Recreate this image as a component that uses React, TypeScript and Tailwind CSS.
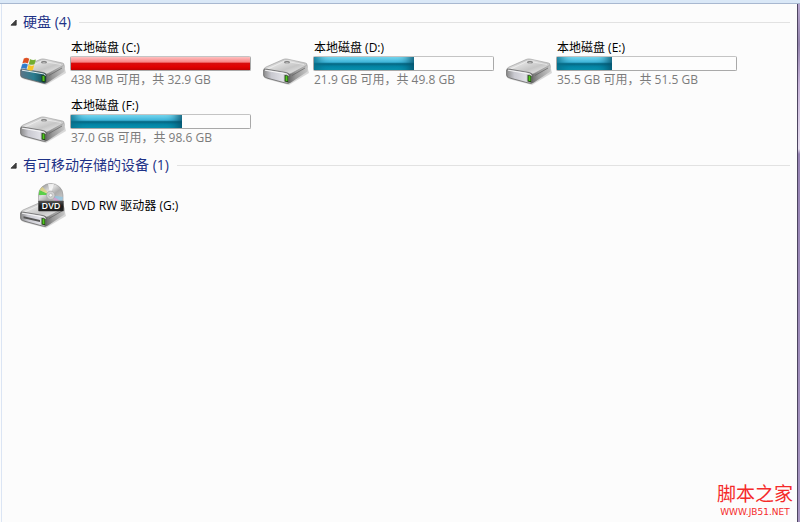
import React, { useState } from 'react';

interface Drive {
  label: string;
  free: string;
  used: number; // percent of the disk in use
  full?: boolean;
  system?: boolean;
}

const drives: Drive[] = [
  { label: '本地磁盘 (C:)', free: '438 MB 可用，共 32.9 GB', used: 100, full: true, system: true },
  { label: '本地磁盘 (D:)', free: '21.9 GB 可用，共 49.8 GB', used: 56 },
  { label: '本地磁盘 (E:)', free: '35.5 GB 可用，共 51.5 GB', used: 31 },
  { label: '本地磁盘 (F:)', free: '37.0 GB 可用，共 98.6 GB', used: 62 },
];

const DriveGradients = () => (
  <svg width="0" height="0" className="absolute" aria-hidden="true">
    <defs>
      <linearGradient id="driveTop" x1="0" y1="0" x2="1" y2="1">
        <stop offset="0" stopColor="#8c8c8c" />
        <stop offset="0.35" stopColor="#dedede" />
        <stop offset="0.6" stopColor="#c6c6c6" />
        <stop offset="1" stopColor="#f4f4f4" />
      </linearGradient>
      <linearGradient id="driveFront" x1="0" y1="0" x2="1" y2="0">
        <stop offset="0" stopColor="#8a8a8a" />
        <stop offset="0.3" stopColor="#c9c9d0" />
        <stop offset="0.75" stopColor="#e0e0e6" />
        <stop offset="1" stopColor="#808080" />
      </linearGradient>
      <linearGradient id="driveSystem" x1="0" y1="0" x2="1" y2="0">
        <stop offset="0" stopColor="#5c7487" />
        <stop offset="0.5" stopColor="#2a7d90" />
        <stop offset="1" stopColor="#123f4a" />
      </linearGradient>
      <linearGradient id="driveSide" x1="0" y1="0" x2="1" y2="0">
        <stop offset="0" stopColor="#616161" />
        <stop offset="0.4" stopColor="#999" />
        <stop offset="1" stopColor="#c8c8c8" />
      </linearGradient>
      <linearGradient id="disc" x1="0" y1="0" x2="1" y2="1">
        <stop offset="0" stopColor="#7e7e7e" />
        <stop offset="0.4" stopColor="#dedede" />
        <stop offset="0.6" stopColor="#ababab" />
        <stop offset="1" stopColor="#d4d4d4" />
      </linearGradient>
      <linearGradient id="discLabel" x1="0" y1="0" x2="0" y2="1">
        <stop offset="0" stopColor="#555" />
        <stop offset="0.5" stopColor="#1c1c1c" />
        <stop offset="1" stopColor="#222" />
      </linearGradient>
    </defs>
  </svg>
);

const DriveBody = ({ system, slot }: { system?: boolean; slot?: boolean }) => (
  <>
    <path d="M5 24 L28 30 L48 18 L47 14 Z" fill="#000" opacity="0.14" />
    <path d="M27 18.5 L46 9.5 Q47.3 10 47 12 L46.5 16.5 L30 27.5 Q28 28.8 26.5 28.4 Z" fill="url(#driveSide)" />
    <path d="M3 14 Q3 13 5 12 L22 4.5 Q24 3.6 26 4 L44.5 8 Q47 8.8 45.5 10.3 L31 18 Q29 19.2 26.5 18.8 L5 15.5 Z" fill="url(#driveTop)" stroke="#8e8e8e" strokeWidth="0.5" />
    <path d="M7 14 L23.5 6 L43 9.5" fill="none" stroke="#f8f8f8" strokeWidth="0.8" opacity="0.7" />
    <path d="M2.6 15 Q2.8 13.8 4.5 14 L25.5 17.6 Q28.2 18.2 28.4 20.5 L28.4 26 Q28.2 29 25.5 28.3 L4.5 22.7 Q2.6 22 2.6 20 Z" fill={system ? 'url(#driveSystem)' : 'url(#driveFront)'} stroke="#666" strokeWidth="0.8" />
    <path d="M4 15.2 L25.5 18.9 Q27.2 19.3 27.3 21" fill="none" stroke="#fafafa" strokeWidth="0.9" />
    {slot && <path d="M5.5 18.2 L22 22 V24 L5.5 20.2 Z" fill="#555" />}
    <ellipse cx="26" cy="7.2" rx="3" ry="1.2" fill="#7d7d7d" />
    <ellipse cx="26" cy="7.8" rx="1.8" ry="0.6" fill="#c9c9c9" />
    <path d="M31 20.5 L44 13" stroke="#606060" strokeWidth="0.7" />
    <path d="M23.6 20 L27.4 20.8 V27.2 L23.6 26.4 Z" fill="#1d3d12" />
    <path d="M24.5 20.8 L26.5 21.2 V26.2 L24.5 25.8 Z" fill="#4fc81c" />
  </>
);

const DriveIcon = ({ system }: { system?: boolean }) => (
  <svg width="48" height="34" viewBox="0 0 48 34" className="shrink-0" aria-hidden="true">
    <DriveBody system={system} />
    {system && (
      <g stroke="#fff" strokeOpacity="0.4" strokeWidth="0.3">
        <path d="M5.8 3.4 Q8.6 1.8 11.3 3.7 L10 8.6 Q7.3 7 4.3 8.4 Z" fill="#dd4f22" />
        <path d="M12 4 Q14.7 5.7 18 4.5 L16.6 9.3 Q13.6 10.5 10.8 8.9 Z" fill="#72ad30" />
        <path d="M4.1 9.2 Q7 7.7 9.8 9.4 L8.5 14.2 Q5.7 12.5 2.8 13.7 Z" fill="#2f7ccb" />
        <path d="M10.5 9.8 Q13.3 11.4 16.3 10.1 L15 14.9 Q12 16.2 9.2 14.5 Z" fill="#f7c426" />
      </g>
    )}
  </svg>
);

const DvdIcon = () => (
  <svg width="48" height="46" viewBox="0 0 48 46" className="shrink-0" aria-hidden="true">
    <g transform="translate(0 15)">
      <DriveBody slot />
    </g>
    <path d="M20.5 19 V12 A12.2 11.5 0 0 1 45 12 V19 Z" fill="url(#disc)" stroke="#969696" strokeWidth="0.6" />
    <path d="M32.5 12 L21.5 7 L20.8 12 Z" fill="#4fcf3a" opacity="0.9" />
    <path d="M32.5 12 L24.2 3.8 L21.5 7 Z" fill="#e4d878" opacity="0.7" />
    <path d="M32.5 12 L43.8 18.5 L38 19 Z" fill="#d79ad6" opacity="0.8" />
    <path d="M32.5 12 L45 14 L43.8 18.5 Z" fill="#8cc8e8" opacity="0.7" />
    <path d="M32.5 12 L30 1 L36 1 Z" fill="#fff" opacity="0.7" />
    <circle cx="32.7" cy="12.3" r="4.2" fill="#d0d0d0" stroke="#a0a0a0" strokeWidth="0.6" />
    <circle cx="32.7" cy="12.3" r="1.7" fill="#fafafa" stroke="#999" strokeWidth="0.5" />
    <rect x="20.3" y="17.8" width="25.4" height="10.4" rx="0.6" fill="url(#discLabel)" />
    <text x="33" y="26.3" textAnchor="middle" fontSize="9" fontFamily="Open Sans, sans-serif" fontWeight="600" fill="#fff">
      DVD
    </text>
  </svg>
);

const UsageBar = ({ drive }: { drive: Drive }) => (
  <div
    role="meter"
    aria-label={drive.label}
    aria-valuemin={0}
    aria-valuemax={100}
    aria-valuenow={drive.used}
    className="h-[15px] rounded-[2px] border border-[#a9a9a9] bg-[#fdfdfd] border-t-[#c4c4c4]"
  >
    <div
      className={
        drive.full
          ? 'h-full bg-[linear-gradient(to_bottom,#ffc0c0_0%,#f88585_38%,#d80c0c_50%,#e20000_75%,#c00000_100%)]'
          : 'h-full bg-[linear-gradient(to_bottom,#7cdcf4_0%,#3db4d8_40%,#046682_52%,#0588a8_75%,#0b93ae_100%)] shadow-[inset_-14px_0_12px_-10px_#05506a,inset_14px_0_12px_-10px_#0b6f8a]'
      }
      style={{ width: `${drive.used}%` }}
    />
  </div>
);

interface SectionProps {
  title: string;
  count: number;
  children: React.ReactNode;
}

const Section: React.FC<SectionProps> = ({ title, count, children }) => {
  const [open, setOpen] = useState(true);

  return (
    <section>
      <h2 className="flex items-center gap-2 pr-[7px]">
        <button
          type="button"
          aria-expanded={open}
          onClick={() => setOpen(!open)}
          className="flex items-center gap-1.5 text-sm leading-5 text-[#1e3287]"
        >
          <svg width="7" height="7" viewBox="0 0 7 7" className={open ? '' : '-rotate-45'} aria-hidden="true">
            <path d="M6.2 1 V6.2 H1 Z" fill="#404040" stroke="#303030" strokeWidth="0.8" />
          </svg>
          <span>
            {title} ({count})
          </span>
        </button>
        <span className="h-px flex-1 bg-[#e2e2e2]" />
      </h2>
      {open && children}
    </section>
  );
};

export default function App() {
  return (
    <div className="flex min-h-screen flex-col border-t-[3px] border-[#dae8f7] bg-[#fcfcfc] font-['Open_Sans','Noto_Sans_CJK_SC',sans-serif]">
      <DriveGradients />
      <div className="flex flex-1 border-t border-t-[#a8b8d0]">
        <main className="ml-px flex flex-1 flex-col border-l border-[#dbe5f4] pt-2 pl-2">
          <Section title="硬盘" count={4}>
            <ul className="flex flex-wrap gap-y-[9px] py-2 pl-2">
              {drives.map((drive) => (
                <li key={drive.label} className="flex w-[243px] items-end gap-1">
                  <DriveIcon system={drive.system} />
                  <div className="w-[181px]">
                    <p className="pl-px text-xs leading-4 text-black">{drive.label}</p>
                    <UsageBar drive={drive} />
                    <p className="mt-px pl-px text-xs leading-4 text-[#7b7b7b]">{drive.free}</p>
                    <div className="h-px" />
                  </div>
                </li>
              ))}
            </ul>
          </Section>

          <Section title="有可移动存储的设备" count={1}>
            <ul className="py-2 pl-2">
              <li className="flex items-center gap-1">
                <DvdIcon />
                <p className="pl-px text-xs leading-4 text-black">DVD RW 驱动器 (G:)</p>
              </li>
            </ul>
          </Section>

          <footer className="mt-auto self-end pr-1 pb-1 text-center text-[#f52a2a]">
            <p className="text-[19px] leading-6">脚本之家</p>
            <p className="font-['DejaVu_Sans',sans-serif] text-[9px] leading-3">WWW.JB51.NET</p>
          </footer>
        </main>
        <div className="w-[3px] border-l border-[#4d4560] bg-[linear-gradient(to_bottom,#b9a8cf_0px,#9484ae_40px,#c6b2d8_80px,#e6dcee_145px,#9683b4_150px,#a594c0_100%)]" />
      </div>
    </div>
  );
}
